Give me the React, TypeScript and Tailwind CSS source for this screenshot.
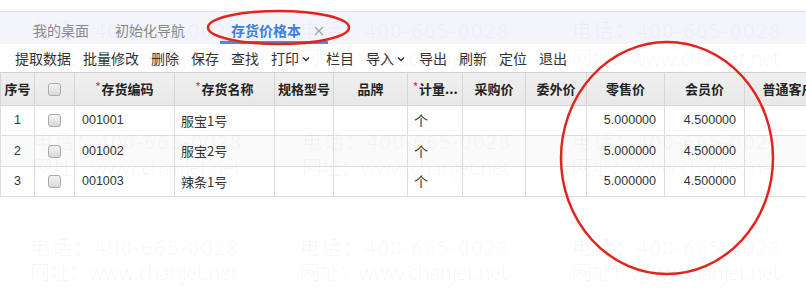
import React from "react";

const FONT = '"Liberation Sans", "Noto Sans CJK SC", sans-serif';
const CJK = '"Noto Sans CJK SC", "Liberation Sans", sans-serif';

function Chevron() {
  return (
    <svg width="8" height="6" viewBox="0 0 8 6" className="ml-[3px] mt-[1px]">
      <polyline points="1,1.5 4,4.5 7,1.5" fill="none" stroke="#333" strokeWidth="1.5" />
    </svg>
  );
}

function Checkbox() {
  return (
    <span className="inline-block w-[13px] h-[13px] rounded-[3px] border border-[#a9a9a9] bg-gradient-to-b from-[#f4f4f4] to-[#d9d9d9]" />
  );
}

function Star() {
  return <span className="text-[#e0406a] text-[10px] relative top-[-4px] mr-[1px]">*</span>;
}

const cols = "grid grid-cols-[34px_40px_100px_100px_59px_74px_55px_63px_61px_78px_80px_88px]";

const rows = [
  { n: "1", code: "001001", name: "服宝1号" },
  { n: "2", code: "001002", name: "服宝2号" },
  { n: "3", code: "001003", name: "辣条1号" },
];

const wm = [
  [30, 21, "p"], [300, 21, "p"], [572, 21, "p"],
  [30, 49, "w"], [300, 49, "w"], [572, 49, "w"],
  [33, 132, "p"], [302, 132, "p"], [572, 132, "p"],
  [33, 158, "w"], [302, 158, "w"], [572, 158, "w"],
  [30, 238, "p"], [300, 238, "p"], [572, 238, "p"],
  [30, 263, "w"], [300, 263, "w"], [572, 263, "w"],
] as const;

export default function App() {
  const th = "h-full flex items-center justify-center border-r border-[#d6d6d6] font-bold text-[13px] text-[#222] whitespace-nowrap overflow-hidden";
  const td = "h-full flex items-center border-r border-[#dedede] text-[12.5px] text-[#333] whitespace-nowrap overflow-hidden";
  return (
    <div className="relative w-[806px] h-[296px] overflow-hidden bg-white" style={{ fontFamily: FONT }}>
      <div className="h-[11px]" />
      {/* tab bar */}
      <div className="h-[33px] border-t border-[#dde1ea] bg-[#f3f5fb] flex items-stretch pl-[33px] text-[14px]" style={{ fontFamily: CJK }}>
        <div className="flex items-center pt-[4px] text-[#8a8a8a]">我的桌面</div>
        <div className="flex items-center pt-[4px] ml-[26px] text-[#8a8a8a]">初始化导航</div>
        <div className="relative flex items-center pt-[4px] ml-[35px] w-[108px] pl-[11px]">
          <span className="font-bold text-[#3f7fd6]">存货价格本</span>
          <svg width="10" height="10" viewBox="0 0 10 10" className="ml-[13px] mt-[1px]">
            <path d="M1 1 L9 9 M9 1 L1 9" stroke="#a6a6a6" strokeWidth="1.3" />
          </svg>
          <div className="absolute left-0 right-0 bottom-0 h-[3px] bg-[#4a8be2]" />
        </div>
      </div>
      {/* toolbar */}
      <div className="h-[29px] flex items-center pl-[15px] gap-[12px] text-[14px] text-[#333] border-b border-[#cfcfcf]" style={{ fontFamily: CJK }}>
        <span>提取数据</span>
        <span>批量修改</span>
        <span>删除</span>
        <span>保存</span>
        <span>查找</span>
        <span className="flex items-center">打印<Chevron /></span>
        <span className="ml-[4px]">栏目</span>
        <span className="flex items-center">导入<Chevron /></span>
        <span className="ml-[2px]">导出</span>
        <span>刷新</span>
        <span>定位</span>
        <span>退出</span>
      </div>
      {/* table */}
      <div className="w-[900px]" style={{ fontFamily: CJK }}>
        <div className={`${cols} h-[33px] bg-gradient-to-b from-[#f0f0f0] to-[#e8e8e8] border-b border-[#d6d6d6] border-l border-l-[#d6d6d6]`}>
          <div className={th}>序号</div>
          <div className={th}><Checkbox /></div>
          <div className={th}><Star />存货编码</div>
          <div className={th}><Star />存货名称</div>
          <div className={th}>规格型号</div>
          <div className={th}>品牌</div>
          <div className={`${th} !justify-start pl-[5px]`}><Star />计量...</div>
          <div className={th}>采购价</div>
          <div className={th}>委外价</div>
          <div className={th}>零售价</div>
          <div className={th}>会员价</div>
          <div className={th}>普通客户</div>
        </div>
        {rows.map((r, i) => (
          <div
            key={r.n}
            className={`${cols} ${i === 1 ? "h-[31px]" : "h-[30px]"} border-b border-[#dedede] border-l border-l-[#dedede] ${i === 1 ? "bg-[#fafafa]" : "bg-white"}`}
          >
            <div className={`${td} justify-center`} style={{ fontFamily: FONT }}>{r.n}</div>
            <div className={`${td} justify-center`}><Checkbox /></div>
            <div className={`${td} pl-[7px]`} style={{ fontFamily: FONT }}>{r.code}</div>
            <div className={`${td} pl-[6px] text-[13px]`}>{r.name}</div>
            <div className={td} />
            <div className={td} />
            <div className={`${td} pl-[6px] text-[14px]`}>个</div>
            <div className={td} />
            <div className={td} />
            <div className={`${td} justify-end pr-[8px]`} style={{ fontFamily: FONT }}>5.000000</div>
            <div className={`${td} justify-end pr-[8px]`} style={{ fontFamily: FONT }}>4.500000</div>
            <div className={td} />
          </div>
        ))}
      </div>

      {/* watermark overlay */}
      <div className="pointer-events-none absolute inset-0" style={{ fontFamily: '"Open Sans", "Noto Sans CJK SC", sans-serif' }}>
        {wm.map(([x, y, k], i) => (
          <div
            key={i}
            className={`absolute text-[20px] leading-none whitespace-nowrap text-[rgba(20,30,80,0.035)] ${k === "p" ? "tracking-[1.5px]" : "tracking-[-0.5px]"}`}
            style={{ left: x, top: y }}
          >
            {k === "p" ? "电话：400-665-0028" : "网址：www.chanjet.net"}
          </div>
        ))}
      </div>

      {/* red annotations */}
      <svg className="pointer-events-none absolute inset-0" width="806" height="296" viewBox="0 0 806 296">
        <ellipse cx="278.5" cy="27.5" rx="70.5" ry="16.5" fill="none" stroke="#e3241c" strokeWidth="2.5" />
        <ellipse cx="667" cy="158" rx="106" ry="116" fill="none" stroke="#e3241c" strokeWidth="2.5" />
      </svg>
    </div>
  );
}
